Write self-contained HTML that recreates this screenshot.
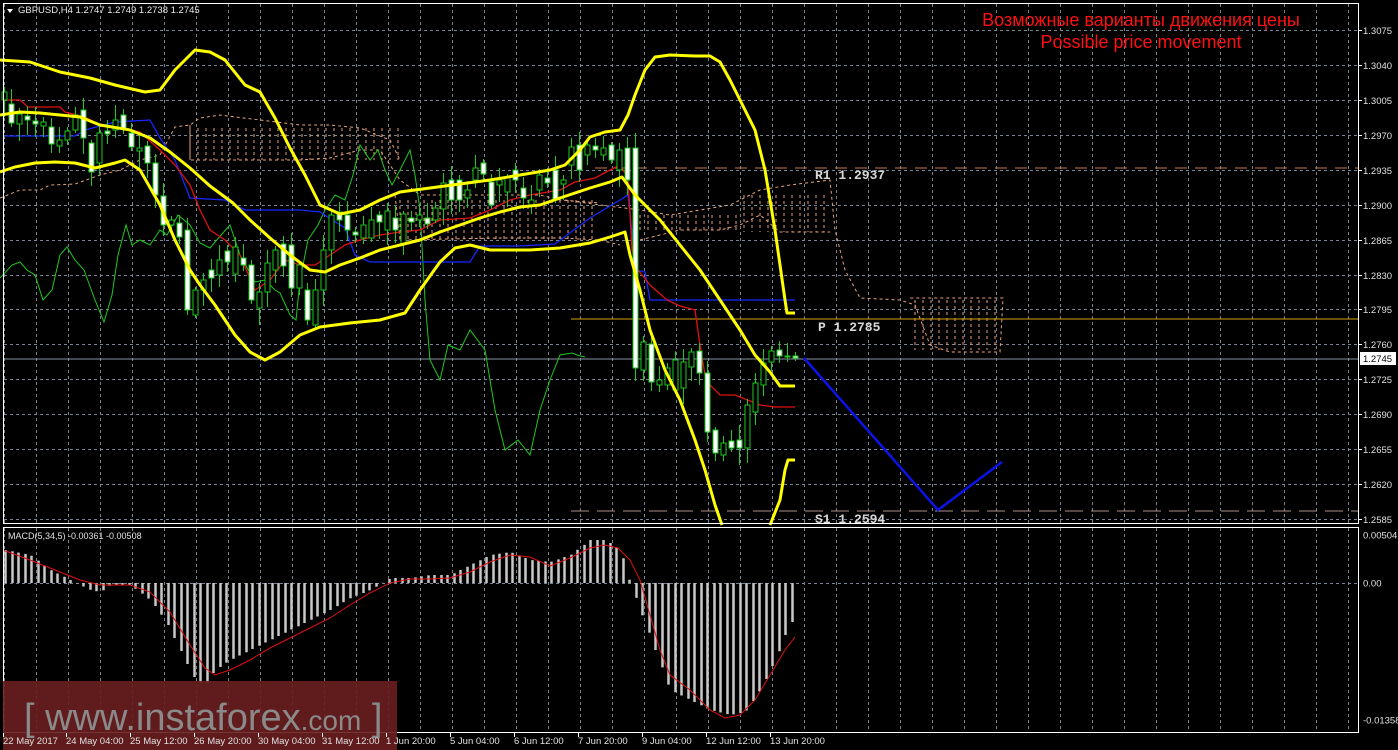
<!DOCTYPE html>
<html><head><meta charset="utf-8"><style>
html,body{margin:0;padding:0;background:#000;overflow:hidden}
svg{display:block}
text{font-family:"Liberation Sans",sans-serif}
text.mono{font-family:"Liberation Mono",monospace}
</style></head><body>
<svg id="s" width="1398" height="750" xmlns="http://www.w3.org/2000/svg">
<rect width="1398" height="750" fill="#000"/>
<g id="grid" stroke="#7a8392" stroke-width="1" stroke-dasharray="3,3"></g>
<g fill="none" stroke="#e8a27a" stroke-width="1" stroke-dasharray="3,3">
<path d="M0 198 L20 190 L40 190 L50 185 L75 184 L100 175 L120 170 L140 160 L160 155 L175 127 L190 125 L200 118 L220 115 L260 120 L300 125 L330 125 L360 128 L390 140 L400 160"/>
<path d="M190 125 L190 160 L300 160 L330 158 L360 150 L380 150 L400 180 L420 195 L460 195 L500 195 L540 195 L560 200 L600 203"/>
<path d="M395 195 L400 240 L500 238 L520 238 L560 238 L600 240 L620 245"/>
<path d="M565 200 L600 205 L640 210 L670 215 L700 210 L730 205 L740 200 L760 190 L790 185 L830 180 L835 230 L845 270 L860 298 L900 300 L915 305 L930 345 L950 352 L1000 352 L1003 298 L910 298"/>
<path d="M640 240 L680 230 L720 230 L740 225 L760 215 L780 232 L830 232"/>
</g>
<g stroke="#e8a27a" stroke-width="1" stroke-dasharray="3,3" id="cloudv"></g>
<line x1="595" y1="168" x2="1359" y2="168" stroke="#c87850" stroke-dasharray="12,8"/>
<line x1="571" y1="319" x2="1359" y2="319" stroke="#d4a000"/>
<line x1="571" y1="511" x2="1359" y2="511" stroke="#b0908a" stroke-dasharray="18,8"/>
<line x1="3" y1="359" x2="1359" y2="359" stroke="#8a94a4"/>
<polyline fill="none" stroke="#1ec81e" stroke-width="1" points="0,278 12,265 20,262 27,270 35,275 43,300 52,290 60,255 67,247 75,260 84,270 95,300 104,322 112,295 118,255 126,225 132,245 140,240 150,245 160,230 167,235 178,215 190,225 200,243 210,248 222,234 230,225 240,255 255,282 265,280 275,290 280,293 290,315 296,320 300,280 308,240 318,225 325,210 335,195 345,200 353,175 360,145 370,160 378,150 385,170 392,185 400,170 410,150 415,175 420,210 425,300 430,360 440,380 448,345 460,350 470,330 485,350 495,410 505,450 518,440 530,455 540,410 550,380 560,355 572,353 580,356 585,357"/>
<polyline fill="none" stroke="#1428ff" stroke-width="1.3" points="3,136 75,136 85,130 115,122 150,120 160,138 175,160 190,198 225,200 245,210 300,210 320,212 345,228 355,255 370,262 470,262 480,246 520,246 555,244 590,218 620,200 628,195 636,270 645,272 650,300 795,300"/>
<polyline fill="none" stroke="#e01010" stroke-width="1.3" points="3,100 20,100 28,107 60,107 65,112 85,117 100,125 120,128 140,132 160,150 175,165 190,185 200,210 210,230 225,240 240,255 255,290 270,280 285,260 300,265 315,265 330,255 345,245 360,240 380,235 400,232 420,230 440,220 470,218 490,210 510,200 530,195 560,190 575,182 595,178 610,170 620,165 628,178 632,250 638,270 650,285 667,300 680,306 695,310 700,345 705,375 710,385 720,395 735,395 760,405 775,407 795,407"/>
<g id="candles"></g>
<g fill="none" stroke="#ffff00" stroke-width="3" stroke-linejoin="round">
<polyline points="0,60 30,62 60,72 90,78 115,85 145,92 160,90 175,70 195,50 210,52 225,60 245,85 260,92 275,118 290,148 305,175 320,205 340,214 360,210 380,200 400,192 430,188 460,184 490,180 520,175 550,170 565,165 580,150 590,137 605,132 620,130 628,115 635,95 645,70 655,57 670,55 695,56 710,56 720,62 730,80 740,100 755,130 765,170 770,200 775,230 785,300 787,313 795,313"/>
<polyline points="0,115 20,112 40,113 60,115 80,117 100,125 130,130 150,138 170,152 190,168 210,186 233,203 250,220 270,238 290,255 310,270 325,272 340,265 360,258 380,250 400,245 420,240 440,232 460,225 480,218 500,212 520,207 540,205 560,198 590,188 610,182 622,177 635,195 660,220 680,245 700,270 720,300 740,330 755,355 770,372 780,386 795,386"/>
<polyline points="0,172 15,167 35,163 55,162 75,163 95,168 115,163 125,160 140,170 160,205 175,240 190,270 200,285 215,305 235,335 250,352 265,360 280,352 300,335 320,327 350,323 380,320 405,313 420,290 440,262 455,248 470,245 490,250 510,250 530,250 560,248 590,243 610,237 625,232 630,255 640,290 650,330 665,370 680,400 695,440 705,470 715,505 722,525"/>
<polyline points="770,525 780,500 785,470 788,460 795,460"/>
</g>
<polyline fill="none" stroke="#0a14e6" stroke-width="2.5" points="804,358 938,510 1002,462"/>
<g fill="#d8d8d8" font-size="13" font-weight="bold">
<text class="mono" x="815" y="179">R1 1.2937</text>
<text class="mono" x="818" y="331">P 1.2785</text>
<text class="mono" x="815" y="523">S1 1.2594</text>
</g>
<text x="1141" y="26" fill="#ff1010" font-size="18" text-anchor="middle">Возможные варианты движения цены</text>
<text x="1141" y="48" fill="#ff1010" font-size="18" text-anchor="middle">Possible price movement</text>
<g id="macd"></g>
<polyline fill="none" stroke="#e01010" stroke-width="1" points="3,550 30,560 60,572 80,580 100,585 130,585 150,592 170,612 190,645 205,668 215,675 230,670 250,660 270,648 290,638 310,628 330,618 350,605 370,593 390,583 410,579 430,579 450,578 470,572 490,562 510,555 530,557 550,566 570,558 590,548 605,545 618,548 630,560 640,580 650,615 660,650 670,675 690,690 710,710 725,718 740,715 755,700 770,675 785,650 795,637"/>
<text x="8" y="539" fill="#e0e0e0" font-size="9">MACD(5,34,5) -0.00361 -0.00508</text>
<path d="M7 9 L13 9 L10 13 Z" fill="#fff"/>
<text x="18" y="13" fill="#e8e8e8" font-size="9.5">GBPUSD,H4  1.2747 1.2749 1.2738 1.2745</text>
<g fill="none" stroke="#fff" stroke-width="1">
<rect x="3.5" y="3.5" width="1355" height="520"/>
<rect x="3.5" y="527.5" width="1355" height="205"/>
</g>
<g id="axis" fill="#e0e0e0" font-size="9.5"></g>
<rect x="1360" y="352" width="36" height="13" fill="#fff"/>
<text x="1363" y="362" fill="#000" font-size="9.5">1.2745</text>
<rect x="3" y="681" width="394" height="69" fill="#6a1f1f" opacity="0.9"/>
<text x="24" y="730" fill="#8a8a8a" font-size="38">[ www.instaforex<tspan font-size="28">.com</tspan> ]</text>
<g id="times" fill="#e0e0e0" font-size="9.5"></g>
</svg>
<script>
var NS="http://www.w3.org/2000/svg";
function el(p,t,a,txt){var e=document.createElementNS(NS,t);for(var k in a)e.setAttribute(k,a[k]);if(txt)e.textContent=txt;document.getElementById(p).appendChild(e);return e;}
for(var x=4;x<1358;x+=32){el("grid","line",{x1:x+.5,y1:4,x2:x+.5,y2:523});el("grid","line",{x1:x+.5,y1:528,x2:x+.5,y2:732});}
var prices=["1.3075","1.3040","1.3005","1.2970","1.2935","1.2900","1.2865","1.2830","1.2795","1.2760","1.2725","1.2690","1.2655","1.2620","1.2585"];
for(var i=0;i<15;i++){var y=Math.round(30+i*34.93)+.5;el("grid","line",{x1:4,y1:y,x2:1358,y2:y});el("axis","text",{x:1363,y:y+3.5},prices[i]);el("axis","line",{x1:1358,y1:y,x2:1362,y2:y,stroke:"#fff"});}
el("grid","line",{x1:4,y1:583.5,x2:1358,y2:583.5});
[["0.00504",535],["0.00",583],["-0.01358",720]].forEach(function(a){el("axis","text",{x:1363,y:a[1]+3.5},a[0]);});
for(var x=190;x<400;x+=8){el("cloudv","line",{x1:x,y1:128,x2:x,y2:160});}
for(var x=400;x<600;x+=8){el("cloudv","line",{x1:x,y1:200,x2:x,y2:240});}
for(var x=640;x<830;x+=8){el("cloudv","line",{x1:x,y1:(x<740?215:195),x2:x,y2:232});}
for(var x=915;x<1000;x+=8){el("cloudv","line",{x1:x,y1:300,x2:x,y2:350});}
var C=[[4,92,100,0],[11,104,123,1],[19,114,124,0],[27,116,120,1],[35,121,124,1],[43,122,126,0],[51,127,144,1],[59,140,146,0],[67,131,140,0],[75,115,130,0],[83,110,138,1],[91,143,172,1],[99,133,163,0],[107,131,134,1],[115,120,130,0],[123,115,128,1],[131,133,147,1],[139,148,151,0],[147,146,163,1],[155,163,195,1],[163,196,225,1],[171,220,225,0],[179,223,237,1],[187,230,310,1],[195,290,315,0],[203,280,290,0],[211,270,278,1],[219,260,275,0],[227,251,262,1],[235,247,274,0],[243,258,265,1],[251,265,300,1],[259,292,308,0],[267,263,292,0],[275,250,270,0],[283,244,266,1],[291,245,288,1],[299,265,288,0],[307,290,320,1],[315,290,325,0],[323,250,290,0],[331,215,250,0],[339,212,220,1],[347,215,230,1],[355,232,235,1],[363,225,238,0],[371,220,238,0],[379,215,222,1],[387,211,230,0],[395,218,230,1],[403,214,244,0],[411,218,222,1],[419,215,220,0],[427,218,224,1],[435,208,220,0],[443,183,209,0],[451,180,200,1],[459,180,200,1],[467,190,198,0],[475,168,180,0],[483,163,174,1],[491,182,205,1],[499,180,185,0],[507,177,192,0],[515,170,180,1],[523,188,198,1],[531,200,205,0],[539,175,190,0],[547,178,183,1],[555,170,200,1],[563,180,184,0],[571,147,165,0],[579,145,170,1],[587,145,155,0],[595,146,150,1],[603,148,155,0],[611,145,160,1],[619,150,170,0],[627,148,180,1],[635,148,368,1],[643,342,370,0],[651,344,382,1],[659,380,385,0],[667,368,385,0],[675,360,390,0],[683,362,388,0],[691,352,367,0],[699,351,373,1],[707,373,432,1],[715,430,453,1],[723,443,455,0],[731,441,448,1],[739,440,448,1],[747,405,448,0],[755,383,412,0],[763,363,385,0],[771,351,362,0],[779,350,356,1],[787,356,357,1],[795,356,358,1]];
C.forEach(function(c){var x=c[0]+.5,t=c[1],b=c[2],h=((c[0]*7)%13)+3,l=((c[0]*11)%15)+3;
el("candles","line",{x1:x,y1:t-h,x2:x,y2:b+l,stroke:"#1ec81e","stroke-width":1});
el("candles","rect",{x:x-2.5,y:t,width:5,height:Math.max(1,b-t),fill:c[3]?"#fff":"#000",stroke:"#1ec81e","stroke-width":1});});
function interp(pts,x){for(var i=0;i<pts.length-1;i++){if(x>=pts[i][0]&&x<=pts[i+1][0]){var t=(x-pts[i][0])/(pts[i+1][0]-pts[i][0]);return pts[i][1]+t*(pts[i+1][1]-pts[i][1]);}}return pts[pts.length-1][1];}
var mp=[[5,550],[30,555],[50,570],[70,580],[90,590],[100,592],[110,585],[130,585],[150,600],[165,620],[180,650],[195,680],[205,685],[215,670],[230,660],[250,650],[270,640],[290,630],[310,620],[330,610],[350,598],[370,590],[390,578],[410,578],[430,575],[450,575],[470,565],[490,555],[510,552],[530,560],[550,562],[570,555],[590,540],[605,540],[620,550],[630,583],[640,610],[655,650],[670,690],[690,700],[710,710],[730,715],[745,712],[760,690],[775,660],[785,635],[795,615]];
for(var x=5;x<=795;x+=6.5){var y=interp(mp,x);var cx=Math.round(x)+.5;el("macd","line",{x1:cx,y1:583,x2:cx,y2:y,stroke:"#c8c8c8","stroke-width":2.5});}
var tl=[["22 May 2017",3],["24 May 04:00",66],["25 May 12:00",130],["26 May 20:00",194],["30 May 04:00",258],["31 May 12:00",322],["1 Jun 20:00",386],["5 Jun 04:00",450],["6 Jun 12:00",514],["7 Jun 20:00",578],["9 Jun 04:00",642],["12 Jun 12:00",706],["13 Jun 20:00",770]];
tl.forEach(function(a){el("times","text",{x:a[1],y:744},a[0]);el("times","line",{x1:a[1]+.5,y1:733,x2:a[1]+.5,y2:737,stroke:"#fff"});});
</script>
</body></html>
